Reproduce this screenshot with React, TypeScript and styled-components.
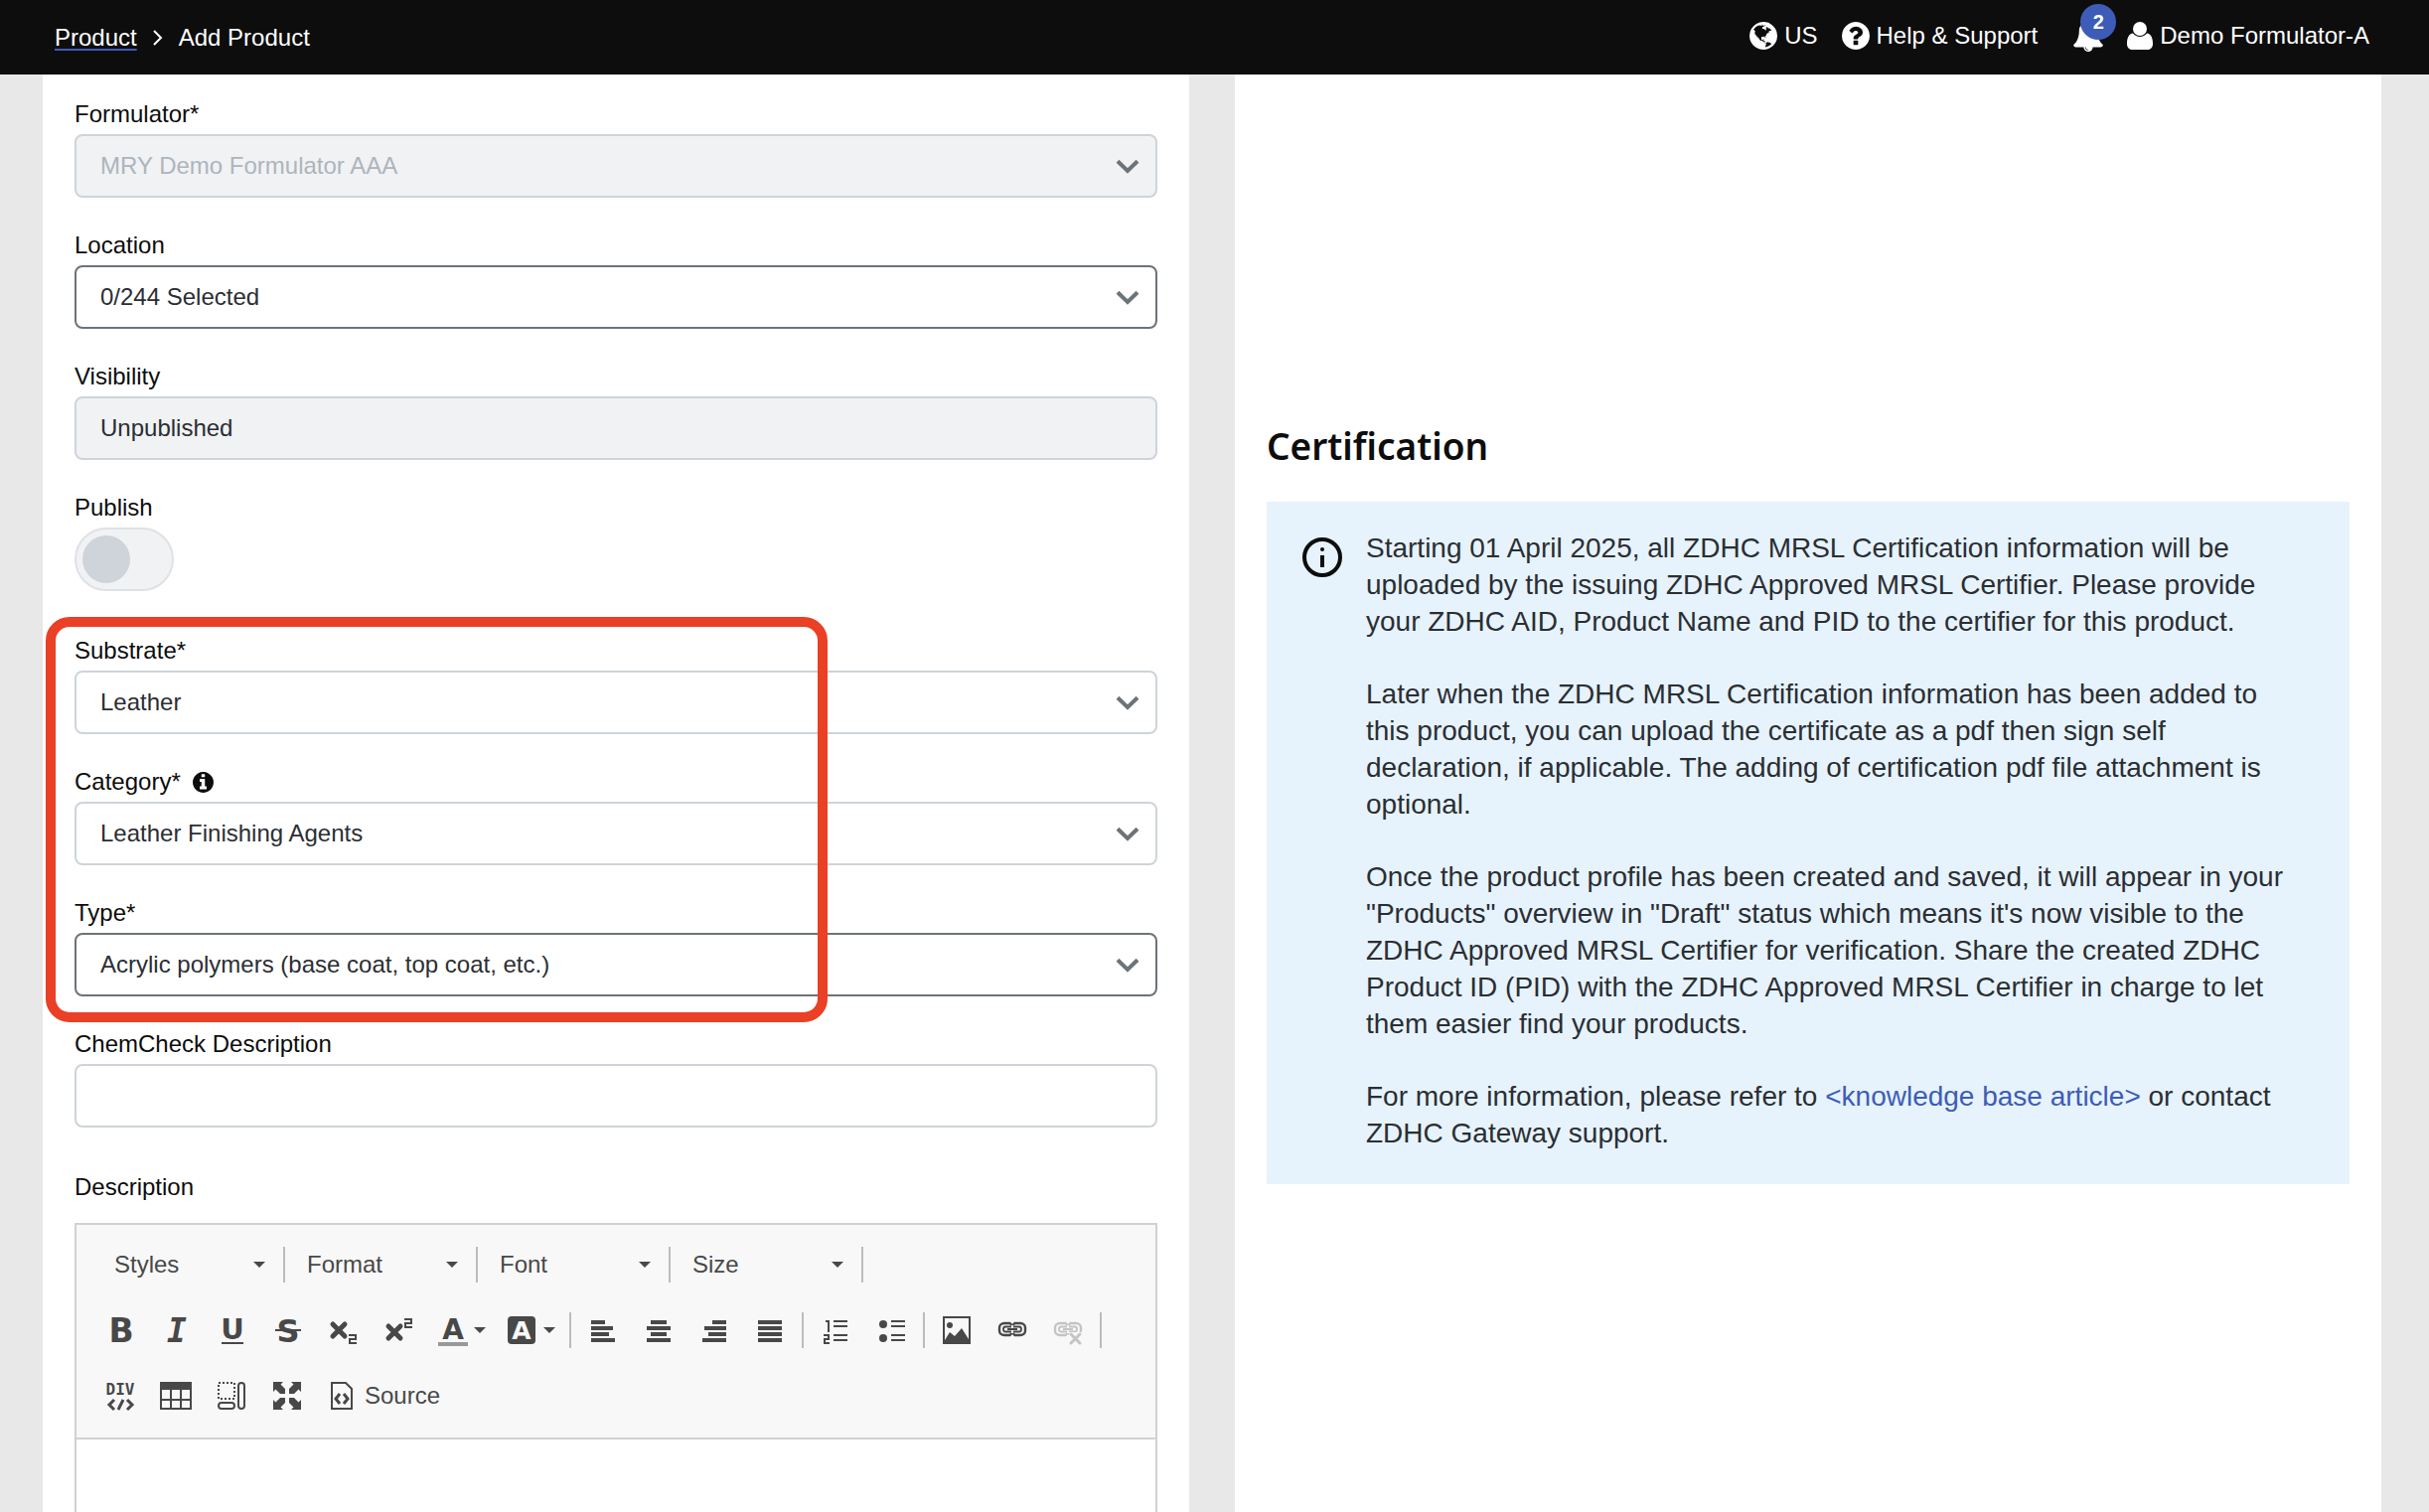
import React from 'react';
import styled, { createGlobalStyle, css } from 'styled-components';

const colors = {
  ink: '#0d0d0d',
  text: '#2b2e33',
  muted: '#adb5bd',
  border: '#ced4d9',
  borderStrong: '#6c7379',
  disabled: '#f1f2f4',
  page: '#e8e8e8',
  info: '#e6f3fc',
  link: '#3d5cb8',
  highlight: '#ea4025',
  tool: '#484848',
};

const GlobalStyle = createGlobalStyle`
  *, *::before, *::after { box-sizing: border-box; }
  body {
    margin: 0;
    background: ${colors.page};
    color: ${colors.ink};
    font-family: 'Liberation Sans', Arial, sans-serif;
    font-size: 24px;
    line-height: 32px;
  }
  button, input, select, textarea { font: inherit; margin: 0; }
  svg { display: block; flex: none; }
`;

/* ---------- shell ---------- */

const Shell = styled.div`
  display: flex;
  flex-direction: column;
  height: 100vh;
`;

const Header = styled.header`
  display: flex;
  flex: none;
  align-items: center;
  justify-content: space-between;
  height: 75px;
  padding: 0 60px 0 55px;
  background: ${colors.ink};
  color: #fff;
`;

const Breadcrumb = styled.nav`
  display: flex;
  align-items: center;
  gap: 16px;
`;

const CrumbLink = styled.a`
  color: #fff;
  text-decoration: underline 2px ${colors.link};
  text-underline-offset: 3px;
  text-decoration-skip-ink: none;
`;

const HeaderTools = styled.div`
  display: flex;
  align-items: center;
  gap: 24px;
`;

const HeaderButton = styled.button`
  display: flex;
  align-items: center;
  gap: 7px;
  padding: 0 0 3px;
  border: 0;
  background: none;
  color: #fff;
  white-space: nowrap;
`;

const BellButton = styled(HeaderButton)`
  position: relative;
  margin-left: 12px;
`;

const Badge = styled.span`
  position: absolute;
  top: -16px;
  left: 7px;
  width: 36px;
  height: 36px;
  border-radius: 50%;
  background: ${colors.link};
  font-size: 20px;
  font-weight: 700;
  line-height: 36px;
  text-align: center;
`;

const Main = styled.main`
  display: grid;
  flex: 1;
  grid-template-columns: minmax(0, 1fr) minmax(0, 1fr);
  gap: 46px;
  min-height: 0;
  padding: 0 48px 0 43px;
  overflow-y: auto;
  scrollbar-width: none;
`;

const Panel = styled.section`
  padding: 24px 32px;
  background: #fff;
`;

const FormPanel = styled(Panel)`
  display: flex;
  flex-direction: column;
  gap: 44px;
`;

/* ---------- form ---------- */

const FieldGroup = styled.div`
  position: relative;
  display: flex;
  flex-direction: column;
  gap: 32px;
`;

const Highlight = styled.div`
  position: absolute;
  top: -18px;
  bottom: -26px;
  left: -29px;
  width: 787px;
  border: 10px solid ${colors.highlight};
  border-radius: 24px;
  pointer-events: none;
`;

const Field = styled.div<{ $gap?: number }>`
  display: flex;
  flex-direction: column;
  align-items: flex-start;
  gap: ${(p) => p.$gap ?? 4}px;
`;

const LabelRow = styled.div`
  display: flex;
  align-items: center;
  gap: 12px;
`;

const control = css<{ $strong?: boolean }>`
  width: 100%;
  height: 64px;
  padding: 0 24px;
  border: 2px solid ${(p) => (p.$strong ? colors.borderStrong : colors.border)};
  border-radius: 8px;
  background: #fff;
  color: ${colors.text};
`;

const TextInput = styled.input`
  ${control}
  &:read-only { background: ${colors.disabled}; }
`;

const SelectWrap = styled.div`
  display: grid;
  width: 100%;
  align-items: center;
  > * { grid-area: 1 / 1; }
  > svg {
    justify-self: end;
    margin-right: 18px;
    pointer-events: none;
  }
`;

const SelectBox = styled.select`
  ${control}
  appearance: none;
  &:disabled {
    background: ${colors.disabled};
    color: ${colors.muted};
    opacity: 1;
  }
`;

const Switch = styled.input`
  display: flex;
  align-items: center;
  width: 100px;
  height: 64px;
  padding: 0 6px;
  border: 2px solid #dee2e6;
  border-radius: 32px;
  background: ${colors.disabled};
  appearance: none;
  &::before {
    content: '';
    width: 48px;
    height: 48px;
    border-radius: 50%;
    background: ${colors.border};
  }
`;

const IconButton = styled.button`
  padding: 0;
  border: 0;
  background: none;
  color: ${colors.ink};
`;

/* ---------- rich text editor ---------- */

const Editor = styled.div`
  width: 100%;
  border: 2px solid #d1d1d1;
  background: #fff;
`;

const Toolbar = styled.div`
  display: flex;
  flex-direction: column;
  gap: 10px;
  padding: 12px 16px 14px;
  border-bottom: 2px solid #d1d1d1;
  background: #f8f8f8;
  color: ${colors.tool};
`;

const ToolRow = styled.div`
  display: flex;
  align-items: center;
  height: 56px;
`;

const Divider = styled.span<{ $space?: number }>`
  width: 2px;
  height: 36px;
  margin: 0 ${(p) => p.$space ?? 4}px;
  background: #bcbcbc;
`;

const ToolButton = styled.button<{ $menu?: boolean }>`
  display: flex;
  align-items: center;
  gap: ${(p) => (p.$menu ? 4 : 6)}px;
  height: 56px;
  padding: 0 ${(p) => (p.$menu ? 10 : 12)}px 0 12px;
  border: 0;
  background: none;
  color: ${colors.tool};
  > svg { overflow: visible; }
  &:disabled { color: #c4c4c4; }
`;

const Combo = styled.div`
  display: grid;
  align-items: center;
  width: 192px;
  > * { grid-area: 1 / 1; }
  > svg {
    justify-self: end;
    margin-right: 18px;
    pointer-events: none;
  }
`;

const ComboSelect = styled.select`
  width: 100%;
  height: 56px;
  padding: 0 32px 0 22px;
  border: 0;
  background: none;
  color: ${colors.tool};
  appearance: none;
`;

const EditArea = styled.textarea`
  display: block;
  width: 100%;
  height: 400px;
  padding: 32px;
  border: 0;
  outline: 0;
  background: #fff;
  resize: none;
`;

/* ---------- certification ---------- */

const CertPanel = styled(Panel)`
  padding-top: 350px;
`;

const Title = styled.h2`
  margin: 0 0 32px;
  font-family: 'Noto Sans', 'Open Sans', sans-serif;
  font-size: 37px;
  font-weight: 600;
  line-height: 48px;
`;

const Notice = styled.div`
  display: flex;
  align-items: flex-start;
  gap: 24px;
  padding: 28px 48px 33px 36px;
  background: ${colors.info};
  color: ${colors.text};
  > svg { margin-top: 8px; color: ${colors.ink}; }
`;

const NoticeText = styled.div`
  display: flex;
  flex-direction: column;
  gap: 36px;
  font-size: 28px;
  line-height: 37px;
  p { margin: 0; }
`;

const NoticeLink = styled.a`
  color: ${colors.link};
  text-decoration: none;
`;

/* ---------- icons ---------- */

const Chevron = () => (
  <svg width="24" height="16" viewBox="0 0 24 16" fill="none" stroke={colors.borderStrong} strokeWidth="4">
    <path d="M2 3.2 12 13 22 3.2" />
  </svg>
);

const Caret = () => (
  <svg width="12" height="6" viewBox="0 0 12 6" fill="currentColor">
    <path d="M0 0h12L6 6z" />
  </svg>
);

const CrumbChevron = () => (
  <svg width="10" height="16" viewBox="0 0 10 16" fill="none" stroke="#fff" strokeWidth="2">
    <path d="M1 1l7 7-7 7" />
  </svg>
);

const GlobeIcon = () => (
  <svg width="28" height="28" viewBox="128 128 1536 1536" fill="currentColor">
    <path d="M896 128q209 0 385.5 103t279.5 279.5 103 385.5-103 385.5-279.5 279.5-385.5 103-385.5-103-279.5-279.5-103-385.5 103-385.5 279.5-279.5 385.5-103zm274 521q-2 1-9.5 9.5t-13.5 9.5q2 0 4.5-5t5-11 3.5-7q6-7 22-15 14-6 52-12 34-8 51 11-2-2 9.5-13t14.5-12q3-2 15-4.5t15-7.5l2-22q-12 1-17.5-7t-6.5-21q0 2-6 8 0-7-4.5-8t-11.5 1-9 1q-10-3-15-7.5t-8-16.5-4-15q-2-5-9.5-10.5t-9.5-10.5q-1-2-2.5-5.5t-3-6.5-4-5.5-5.5-2.5-7 5-7.5 10-4.5 5q-3-2-6-1.5t-4.5 1-4.5 3-5 3.5q-3 2-8.5 3t-8.5 2q15-5-1-11-10-4-16-3 9-4 7.5-12t-8.5-14h5q-1-4-8.5-8.5t-17.5-8.5-13-6q-8-5-34-9.5t-33-.5q-5 6-4.5 10.5t4 14 3.5 12.5q1 6-5.5 13t-6.5 12q0 7 14 15.5t10 21.5q-3 8-16 16t-16 12q-5 8-1.5 18.5t10.5 16.5q2 2 1.5 4t-3.5 4.5-5.5 4-6.5 3.5l-3 2q-11 5-20.5-6t-13.5-26q-7-25-16-30-23-8-29 1-5-13-41-26-25-9-58-4 6-1 0-15-7-15-19-12 3-6 4-17.5t1-13.5q3-13 12-23 1-1 7-8.5t9.5-13.5.5-6q35 4 50-11 5-5 11.5-17t10.5-17q9-6 14-5.5t14.5 5.5 14.5 5q14 1 15.5-11t-7.5-20q12 1 3-17-5-7-8-9-12-4-27 5-8 4 2 8-1-1-9.5 10.5t-16.5 17.5-16-5q-1-1-5.5-13.5t-9.5-13.5q-8 0-16 15 3-8-11-15t-24-8q19-12-8-27-7-4-20.5-5t-19.5 4q-5 7-5.5 11.5t5 8 10.5 5.5 11.5 4 8.5 3q14 10 8 14-2 1-8.5 3.5t-11.5 4.5-6 4q-3 4 0 14t-2 14q-5-5-9-17.5t-7-16.5q7 9-25 6l-10-1q-4 0-16 2t-20.5 1-13.5-8q-4-8 0-20 1-4 4-2-4-3-11-9.5t-10-8.500q-46 15-94 41 6 1 12-1 5-2 13-6.5t10-5.5q34-14 42-7l5-5q14 16 20 25-7-4-30-1-20 6-22 12 7 12 5 18-4-3-11.5-10t-14.5-11-15-5q-16 0-22 1-146 80-235 222 7 7 12 8 4 1 5 9t2.5 11 11.5-3q9 8 3 19 1-1 44 27 19 17 21 21 3 11-10 18-1-2-9-9t-9-4q-3 5 .5 18.5t10.5 12.5q-7 0-9.5 16t-2.5 35.5-1 23.5l2 1q-3 12 5.5 34.5t21.5 19.5q-13 3 20 43 6 8 8 9 3 2 12 7.5t15 10 10 10.5q4 5 10 22.5t14 23.5q-2 6 9.5 20t10.5 23q-1 0-2.5 1t-2.5 1q3 7 15.5 14t15.5 13q1 3 2 10t3 11 8 2q2-20-24-62-15-25-17-29-3-5-5.5-15.5t-4.5-14.5q2 0 6 1.5t8.5 3.5 7.5 4 2 3q-3 7 2 17.5t12 18.5 17 19 12 13q6 6 14 19.5t0 13.5q9 0 20 10.5t17 19.5q5 8 8 26t5 24q2 7 8.5 13.5t12.5 9.5l16 8 13 7q5 2 18.5 10.5t21.5 11.5q10 4 16 4t14.5-2.5 13.5-3.5q15-2 29 15t21 21q36 19 55 11-2 1 .5 7.5t8 15.5 9 14.5 5.5 8.5q5 6 18 15t18 15q6-4 7-9-3 8 7 20t18 10q14-3 14-32-31 15-49-18 0-1-2.5-5.5t-4-8.5-2.5-8.5 0-7.5 5-3q9 0 10-3.5t-2-12.5-4-13q-1-8-11-20t-12-15q-5 9-16 8t-16-9q0 1-1.5 5.5t-1.5 6.5q-13 0-15-1 1-3 2.5-17.5t3.5-22.5q1-4 5.5-12t7.5-14.5 4-12.5-4.5-9.5-17.5-2.5q-19 1-26 20-1 3-3 10.5t-5 11.5-9 7q-7 3-24 2t-24-5q-13-8-22.5-29t-9.5-37q0-10 2.5-26.5t3-25-5.5-24.5q3-2 9-9.5t10-10.5q2-1 4.5-1.5t4.5 0 4-1.5 3-6q-1-1-4-3-3-3-4-3 7 3 28.5-1.5t27.5 1.5q15 11 22-2 0-1-2.5-9.5t-.5-13.5q5 27 29 9 3 3 15.5 5t17.5 5q3 2 7 5.5t5.5 4.5 5-.5 8.5-6.5q10 14 12 24 11 40 19 44 7 3 11 2t4.5-9.5 0-14-1.5-12.5l-1-8v-18l-1-8q-15-3-18.5-12t1.5-18.5 15-18.5q1-1 8-3.5t15.5-6.5 12.5-8q21-19 15-35 7 0 11-9-1 0-5-3t-7.5-5-4.5-2q9-5 2-16 5-3 7.5-11t7.5-10q9 12 21 2 8-8 1-16 5-7 20.5-10.5t18.5-9.5q7 2 8-2t1-12 3-12q4-5 15-9t13-5l17-11q3-4 0-4 18 2 31-11 10-11-6-20 3-6-3-9.5t-15-5.5q3-1 11.5-.5t10.5-1.5q15-10-7-16-17-5-43 12zm-163 877q206-36 351-189-3-3-12.5-4.5t-12.5-3.5q-18-7-24-8 1-7-2.5-13t-8-9-12.5-8-11-7q-2-2-7-6t-7-5.5-7.5-4.5-8.5-2-10 1l-3 1q-3 1-5.5 2.5t-5.5 3-4 3 0 2.5q-21-17-36-22-5-1-11-5.5t-10.5-7-10-1.5-11.5 7q-5 5-6 15t-2 13q-7-5 0-17.5t2-18.5q-3-6-10.5-4.5t-12 4.5-11.5 8.5-9 6.5-8.5 5.5-8.5 7.5q-3 4-6 12t-5 11q-2-4-11.5-6.5t-9.5-5.5q2 10 4 35t5 38q7 31-12 48-27 25-29 40-4 22 12 26 0 7-8 20.5t-7 21.5q0 6 2 16z" />
  </svg>
);

const HelpIcon = () => (
  <svg width="28" height="28" viewBox="128 128 1536 1536" fill="currentColor">
    <path d="M1024 1376v-192q0-14-9-23t-23-9h-192q-14 0-23 9t-9 23v192q0 14 9 23t23 9h192q14 0 23-9t9-23zm256-672q0-88-55.5-163t-138.5-116-170-41q-243 0-371 213-15 24 8 42l132 100q7 6 19 6 16 0 25-12 53-68 86-92 34-24 86-24 48 0 85.5 26t37.5 59q0 38-20 61t-68 45q-63 28-115.5 86.5t-52.5 125.5v36q0 14 9 23t23 9h192q14 0 23-9t9-23q0-19 21.5-49.5t54.5-49.5q32-18 49-28.5t46-35 44.5-48 28-60.5 12.5-81zm384 192q0 209-103 385.5t-279.5 279.5-385.5 103-385.5-103-279.5-279.5-103-385.5 103-385.5 279.5-279.5 385.5-103 385.5 103 279.5 279.5 103 385.5z" />
  </svg>
);

const BellIcon = () => (
  <svg width="30" height="32" viewBox="64 0 1664 1792" fill="currentColor">
    <path d="M912 1696q0-16-16-16-59 0-101.5-42.5t-42.5-101.5q0-16-16-16t-16 16q0 73 51.5 124.5t124.5 51.5q16 0 16-16zm816-288q0 52-38 90t-90 38h-448q0 106-75 181t-181 75-181-75-75-181h-448q-52 0-90-38t-38-90q50-42 91-88t85-119.5 74.5-158.5 50-206 19.5-260q0-152 117-282.5t307-158.5q-8-19-8-39 0-40 28-68t68-28 68 28 28 68q0 20-8 39 190 28 307 158.5t117 282.5q0 139 19.5 260t50 206 74.5 158.5 85 119.5 91 88z" />
  </svg>
);

const UserIcon = () => (
  <svg width="26" height="28" viewBox="0 0 26 28" fill="currentColor">
    <circle cx="13" cy="7" r="7" />
    <path d="M6 11.6c1.7 2.2 4.2 3.5 7 3.5s5.3-1.3 7-3.5c4.2.3 6 4.8 6 10.4 0 3.6-2 6-5.2 6H5.2C2 28 0 25.6 0 22c0-5.600 1.800-10.100 6-10.400z" />
  </svg>
);

const InfoSolidIcon = () => (
  <svg width="21" height="21" viewBox="128 128 1536 1536" fill="currentColor">
    <path d="M1152 1376v-160q0-14-9-23t-23-9h-96v-512q0-14-9-23t-23-9h-320q-14 0-23 9t-9 23v160q0 14 9 23t23 9h96v320h-96q-14 0-23 9t-9 23v160q0 14 9 23t23 9h448q14 0 23-9t9-23zm-128-896v-160q0-14-9-23t-23-9h-192q-14 0-23 9t-9 23v160q0 14 9 23t23 9h192q14 0 23-9t9-23zm640 416q0 209-103 385.5t-279.5 279.5-385.5 103-385.5-103-279.5-279.5-103-385.5 103-385.5 279.5-279.5 385.5-103 385.5 103 279.5 279.5 103 385.5z" />
  </svg>
);

const InfoOutlineIcon = () => (
  <svg width="40" height="40" viewBox="0 0 40 40" fill="none" stroke="currentColor" strokeWidth="4">
    <circle cx="20" cy="20" r="18" />
    <path d="M20 18v12" />
    <circle cx="20" cy="12" r="2" fill="currentColor" stroke="none" />
  </svg>
);

const ToolIcon = ({ children }: { children: React.ReactNode }) => (
  <svg width="32" height="32" viewBox="0 0 32 32" fill="currentColor" aria-hidden="true">
    {children}
  </svg>
);

const Letter = ({
  x = 17,
  y,
  size,
  font = 'DejaVu Sans',
  italic,
  fill,
  children,
}: {
  x?: number;
  y: number;
  size: number;
  font?: string;
  italic?: boolean;
  fill?: string;
  children: string;
}) => (
  <text
    x={x}
    y={y}
    textAnchor="middle"
    fontFamily={`'${font}', sans-serif`}
    fontSize={size}
    fontWeight={700}
    fontStyle={italic ? 'italic' : 'normal'}
    fill={fill ?? 'currentColor'}
  >
    {children}
  </text>
);

const SmallTwo = ({ y }: { y: number }) => (
  <path d={`M22 ${y + 1}h7v4h-6v4h7`} fill="none" stroke="currentColor" strokeWidth="2" />
);

const Cross = ({ x, y, size, width }: { x: number; y: number; size: number; width: number }) => (
  <path
    d={`M${x} ${y}l${size} ${size}M${x + size} ${y}l${-size} ${size}`}
    fill="none"
    stroke="currentColor"
    strokeWidth={width}
    strokeLinecap="round"
  />
);

const AlignLines = ({ spans }: { spans: [number, number][] }) => (
  <ToolIcon>
    {spans.map(([from, to], i) => (
      <rect key={i} x={from} y={6 + i * 6} width={to - from} height="4" />
    ))}
  </ToolIcon>
);

const ChainLinks = () => (
  <g fill="none" stroke="currentColor">
    <path d="M15.5 11 13.500 9H8C5 9 3 11 3 13.500v3C3 19 5 21 8 21h5.500l2-2" strokeWidth="2.400" />
    <path d="M16.5 11 18.500 9H24c3 0 5 2 5 4.500v3c0 2.500-2 4.500-5 4.500h-5.500l-2-2" strokeWidth="2.400" />
    <path d="M15 12.500H9c-1.500 0-2 .800-2 2.500s.500 2.500 2 2.500h6M17 12.500h6c1.500 0 2 .800 2 2.500s-.500 2.500-2 2.500h-6" strokeWidth="1.800" />
    <path d="M11 15h10" strokeWidth="2" />
  </g>
);

/* ---------- parts ---------- */

type SelectFieldProps = {
  id: string;
  label: string;
  value: string;
  strong?: boolean;
  disabled?: boolean;
  hint?: React.ReactNode;
};

const SelectField = ({ id, label, value, strong, disabled, hint }: SelectFieldProps) => (
  <Field>
    <LabelRow>
      <label htmlFor={id}>{label}</label>
      {hint}
    </LabelRow>
    <SelectWrap>
      <SelectBox id={id} $strong={strong} disabled={disabled}>
        <option>{value}</option>
      </SelectBox>
      <Chevron />
    </SelectWrap>
  </Field>
);

const Tool = ({ label, disabled, children }: { label: string; disabled?: boolean; children: React.ReactNode }) => (
  <ToolButton type="button" aria-label={label} disabled={disabled}>
    {children}
  </ToolButton>
);

const combos = ['Styles', 'Format', 'Font', 'Size'];

const RichTextEditor = ({ id }: { id: string }) => (
  <Editor>
    <Toolbar role="toolbar" aria-label="Editor toolbar">
      <ToolRow>
        {combos.map((name) => (
          <React.Fragment key={name}>
            <Combo>
              <ComboSelect aria-label={name}>
                <option>{name}</option>
              </ComboSelect>
              <Caret />
            </Combo>
            <Divider $space={0} />
          </React.Fragment>
        ))}
      </ToolRow>
      <ToolRow>
        <Tool label="Bold">
          <ToolIcon><Letter y={28} size={33}>B</Letter></ToolIcon>
        </Tool>
        <Tool label="Italic">
          <ToolIcon><Letter y={28} size={33} font="DejaVu Sans Mono" italic>I</Letter></ToolIcon>
        </Tool>
        <Tool label="Underline">
          <ToolIcon>
            <Letter y={25} size={29}>U</Letter>
            <rect x="6" y="28" width="22" height="2" />
          </ToolIcon>
        </Tool>
        <Tool label="Strikethrough">
          <ToolIcon>
            <Letter y={28} size={32}>S</Letter>
            <rect x="4" y="15" width="26" height="2" />
          </ToolIcon>
        </Tool>
        <Tool label="Subscript">
          <ToolIcon>
            <Cross x={6} y={10} size={12} width={5} />
            <SmallTwo y={20} />
          </ToolIcon>
        </Tool>
        <Tool label="Superscript">
          <ToolIcon>
            <Cross x={6} y={12} size={12} width={5} />
            <SmallTwo y={4} />
          </ToolIcon>
        </Tool>
        <ToolButton type="button" aria-label="Text colour" $menu>
          <ToolIcon>
            <Letter x={15} y={25} size={28}>A</Letter>
            <rect y="28" width="30" height="4" fill="#999" />
          </ToolIcon>
          <Caret />
        </ToolButton>
        <ToolButton type="button" aria-label="Background colour" $menu>
          <ToolIcon>
            <rect y="2" width="28" height="28" rx="4" />
            <Letter x={14} y={25} size={25} fill="#f8f8f8">A</Letter>
          </ToolIcon>
          <Caret />
        </ToolButton>
        <Divider />
        <Tool label="Align left"><AlignLines spans={[[4, 18], [4, 26], [4, 22], [4, 28]]} /></Tool>
        <Tool label="Centre"><AlignLines spans={[[8, 24], [4, 28], [8, 24], [4, 28]]} /></Tool>
        <Tool label="Align right"><AlignLines spans={[[14, 28], [6, 28], [10, 28], [4, 28]]} /></Tool>
        <Tool label="Justify"><AlignLines spans={[[4, 28], [4, 28], [4, 28], [4, 28]]} /></Tool>
        <Divider />
        <Tool label="Numbered list">
          <ToolIcon>
            <path d="M6 7h3v11M4 21h5v4H5v4h5" fill="none" stroke="currentColor" strokeWidth="2" />
            <path d="M14 6h14v2H14zM14 11h14v2H14zM14 20h14v2H14zM14 25h14v2H14z" />
          </ToolIcon>
        </Tool>
        <Tool label="Bulleted list">
          <ToolIcon>
            <circle cx="8" cy="10" r="4" />
            <circle cx="8" cy="24" r="4" />
            <path d="M16 6h14v2H16zM16 11h14v2H16zM16 20h14v2H16zM16 25h14v2H16z" />
          </ToolIcon>
        </Tool>
        <Divider />
        <Tool label="Image">
          <ToolIcon>
            <rect x="3" y="3" width="26" height="26" fill="none" stroke="currentColor" strokeWidth="2" />
            <circle cx="9" cy="11" r="3" />
            <path d="M4 28v-2l5-8 5 4 7-8 7 11v3z" />
          </ToolIcon>
        </Tool>
        <Tool label="Link"><ToolIcon><ChainLinks /></ToolIcon></Tool>
        <Tool label="Unlink" disabled>
          <ToolIcon>
            <ChainLinks />
            <rect x="17" y="18" width="14" height="14" fill="#f8f8f8" />
            <Cross x={19} y={20} size={9} width={3} />
          </ToolIcon>
        </Tool>
        <Divider />
      </ToolRow>
      <ToolRow>
        <Tool label="Create div container">
          <ToolIcon>
            <Letter x={16} y={15} size={16} font="DejaVu Sans Mono">DIV</Letter>
            <path d="M10 20l-5 5 5 5M23 20l5 5-5 5" fill="none" stroke="currentColor" strokeWidth="3" />
            <path d="M19 20l-5 10" stroke="currentColor" strokeWidth="3" />
          </ToolIcon>
        </Tool>
        <Tool label="Table">
          <ToolIcon>
            <path d="M0 2h32v8H0z" />
            <path d="M1 9v20h30V9M11 9v20M21 9v20M0 20h32" fill="none" stroke="currentColor" strokeWidth="2" />
          </ToolIcon>
        </Tool>
        <Tool label="IFrame">
          <ToolIcon>
            <rect x="3" y="3" width="16" height="16" fill="none" stroke="currentColor" strokeWidth="2" strokeDasharray="2 2" />
            <rect x="23" y="3" width="6" height="26" rx="3" fill="none" stroke="currentColor" strokeWidth="2" />
            <rect x="3" y="23" width="16" height="6" rx="3" fill="none" stroke="currentColor" strokeWidth="2" />
          </ToolIcon>
        </Tool>
        <Tool label="Maximize">
          <ToolIcon>
            <path d="M2 2h10L9.500 4.500 14 9v5H9L4.500 9.500 2 12zM30 2v10l-2.500-2.500L23 14h-5V9l4.500-4.500L20 2zM2 30V20l2.500 2.500L9 18h5v5l-4.500 4.500L12 30zM30 30H20l2.500-2.500L18 23v-5h5l4.500 4.500L30 20z" />
          </ToolIcon>
        </Tool>
        <ToolButton type="button">
          <ToolIcon>
            <path d="M5 3h14l6 6v20H5z" fill="none" stroke="currentColor" strokeWidth="2" />
            <path d="M13 14l-4 5 4 5M17 14l4 5-4 5" fill="none" stroke="currentColor" strokeWidth="3" />
          </ToolIcon>
          Source
        </ToolButton>
      </ToolRow>
    </Toolbar>
    <EditArea id={id} />
  </Editor>
);

export default function App() {
  return (
    <Shell>
      <GlobalStyle />
      <Header>
        <Breadcrumb aria-label="Breadcrumb">
          <CrumbLink href="#product">Product</CrumbLink>
          <CrumbChevron />
          <span>Add Product</span>
        </Breadcrumb>
        <HeaderTools>
          <HeaderButton type="button"><GlobeIcon />US</HeaderButton>
          <HeaderButton type="button"><HelpIcon />Help &amp; Support</HeaderButton>
          <BellButton type="button" aria-label="Notifications">
            <BellIcon />
            <Badge>2</Badge>
          </BellButton>
          <HeaderButton type="button"><UserIcon />Demo Formulator-A</HeaderButton>
        </HeaderTools>
      </Header>
      <Main>
        <FormPanel>
          <FieldGroup>
            <SelectField id="formulator" label="Formulator*" value="MRY Demo Formulator AAA" disabled />
            <SelectField id="location" label="Location" value="0/244 Selected" strong />
            <Field>
              <label htmlFor="visibility">Visibility</label>
              <TextInput id="visibility" defaultValue="Unpublished" readOnly />
            </Field>
            <Field>
              <label htmlFor="publish">Publish</label>
              <Switch id="publish" type="checkbox" role="switch" />
            </Field>
          </FieldGroup>
          <FieldGroup>
            <FieldGroup>
              <SelectField id="substrate" label="Substrate*" value="Leather" />
              <SelectField
                id="category"
                label="Category*"
                value="Leather Finishing Agents"
                hint={<IconButton type="button" aria-label="About categories"><InfoSolidIcon /></IconButton>}
              />
              <SelectField id="type" label="Type*" value="Acrylic polymers (base coat, top coat, etc.)" strong />
              <Highlight />
            </FieldGroup>
            <Field>
              <label htmlFor="chemcheck">ChemCheck Description</label>
              <TextInput id="chemcheck" />
            </Field>
          </FieldGroup>
          <Field $gap={20}>
            <label htmlFor="description">Description</label>
            <RichTextEditor id="description" />
          </Field>
        </FormPanel>
        <CertPanel>
          <Title>Certification</Title>
          <Notice>
            <InfoOutlineIcon />
            <NoticeText>
              <p>
                Starting 01 April 2025, all ZDHC MRSL Certification information will be uploaded by the issuing ZDHC
                Approved MRSL Certifier. Please provide your ZDHC AID, Product Name and PID to the certifier for this
                product.
              </p>
              <p>
                Later when the ZDHC MRSL Certification information has been added to this product, you can upload the
                certificate as a pdf then sign self declaration, if applicable. The adding of certification pdf file
                attachment is optional.
              </p>
              <p>
                Once the product profile has been created and saved, it will appear in your "Products" overview in
                "Draft" status which means it's now visible to the ZDHC Approved MRSL Certifier for verification. Share
                the created ZDHC Product ID (PID) with the ZDHC Approved MRSL Certifier in charge to let them easier
                find your products.
              </p>
              <p>
                For more information, please refer to{' '}
                <NoticeLink href="#article">&lt;knowledge base article&gt;</NoticeLink> or contact ZDHC Gateway
                support.
              </p>
            </NoticeText>
          </Notice>
        </CertPanel>
      </Main>
    </Shell>
  );
}
